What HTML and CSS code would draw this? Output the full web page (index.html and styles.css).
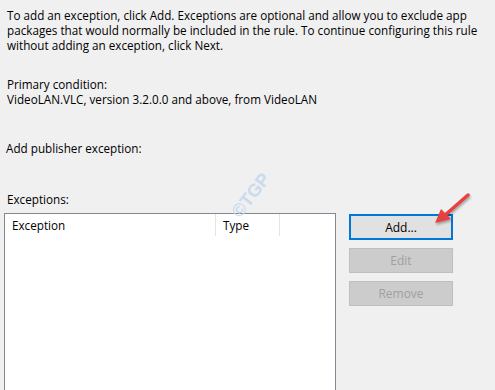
FILE: index.html
```html
<!DOCTYPE html>
<html lang="en">
<head>
    <meta charset="UTF-8">
    <title>Publisher Exceptions</title>
    <link rel="stylesheet" href="styles.css">
</head>
<body>
    <div class="page">
        <p class="intro">To add an exception, click Add. Exceptions are optional and allow you to exclude app packages that would normally be included in the rule. To continue configuring this rule without adding an exception, click Next.</p>
        <div class="condition">
            <div>Primary condition:</div>
            <div>VideoLAN.VLC, version 3.2.0.0 and above, from VideoLAN</div>
        </div>
        <div class="publisher">Add publisher exception:</div>
        <div class="exceptions-label">Exceptions:</div>
        <div class="exceptions">
            <div class="list">
                <div class="list-header">
                    <span class="col col-name">Exception</span>
                    <span class="col col-type">Type</span>
                    <span class="col col-rest"></span>
                </div>
            </div>
            <div class="buttons">
                <button class="btn btn-default">Add...</button>
                <button class="btn" disabled>Edit</button>
                <button class="btn" disabled>Remove</button>
            </div>
        </div>
    </div>
    <div class="watermark">©TGP</div>
    <svg class="arrow" width="50" height="45" viewBox="0 0 50 45">
        <line x1="38" y1="5" x2="14" y2="26" stroke="#e84040" stroke-width="3.5" stroke-linecap="round"/>
        <polygon points="5,33 11,19 21,29" fill="#e84040"/>
    </svg>
</body>
</html>
```
FILE: styles.css
```css
body {
    margin: 0;
    background-color: #f0f0f0;
    font-family: "Open Sans", "Noto Sans", sans-serif;
    font-size: 11.7px;
    color: #000;
    position: relative;
    height: 390px;
    overflow: hidden;
}
.page {
    padding: 8px 0 0 7px;
}
.intro {
    margin: 0;
    width: 484px;
    line-height: 15px;
}
.condition {
    margin-top: 24px;
    line-height: 15px;
}
.publisher {
    margin-top: 34px;
    margin-left: -1px;
    line-height: 15px;
}
.exceptions-label {
    margin-top: 36px;
    line-height: 15px;
}
.exceptions {
    display: flex;
    gap: 13px;
    margin-top: 6px;
    margin-left: -3px;
}
.list {
    width: 330px;
    height: 177px;
    background-color: #fff;
    border: 1px solid #828790;
}
.list-header {
    display: flex;
    height: 22px;
}
.col {
    line-height: 22px;
    padding-left: 7px;
    border-right: 1px solid #e5e5e5;
}
.col-name {
    width: 203px;
}
.col-type {
    width: 56px;
}
.col-rest {
    border-right: none;
}
.buttons {
    display: flex;
    flex-direction: column;
    gap: 8px;
    padding-top: 1px;
}
.btn {
    width: 104px;
    height: 25px;
    font-family: inherit;
    font-size: 12px;
    background-color: #cccccc;
    border: 1px solid #bfbfbf;
    color: #a0a0a0;
    padding: 0;
}
.btn-default {
    background-color: #e1e1e1;
    border: 2px solid #0078d7;
    color: #000;
    height: 26px;
}
.watermark {
    position: absolute;
    left: 226px;
    top: 185px;
    transform: rotate(-52deg);
    color: #c9dbee;
    font-weight: bold;
    font-size: 18px;
    font-family: "Liberation Sans", sans-serif;
}
.arrow {
    position: absolute;
    left: 430px;
    top: 190px;
    filter: drop-shadow(1px 2px 1px rgba(0,0,0,0.3));
}
```
